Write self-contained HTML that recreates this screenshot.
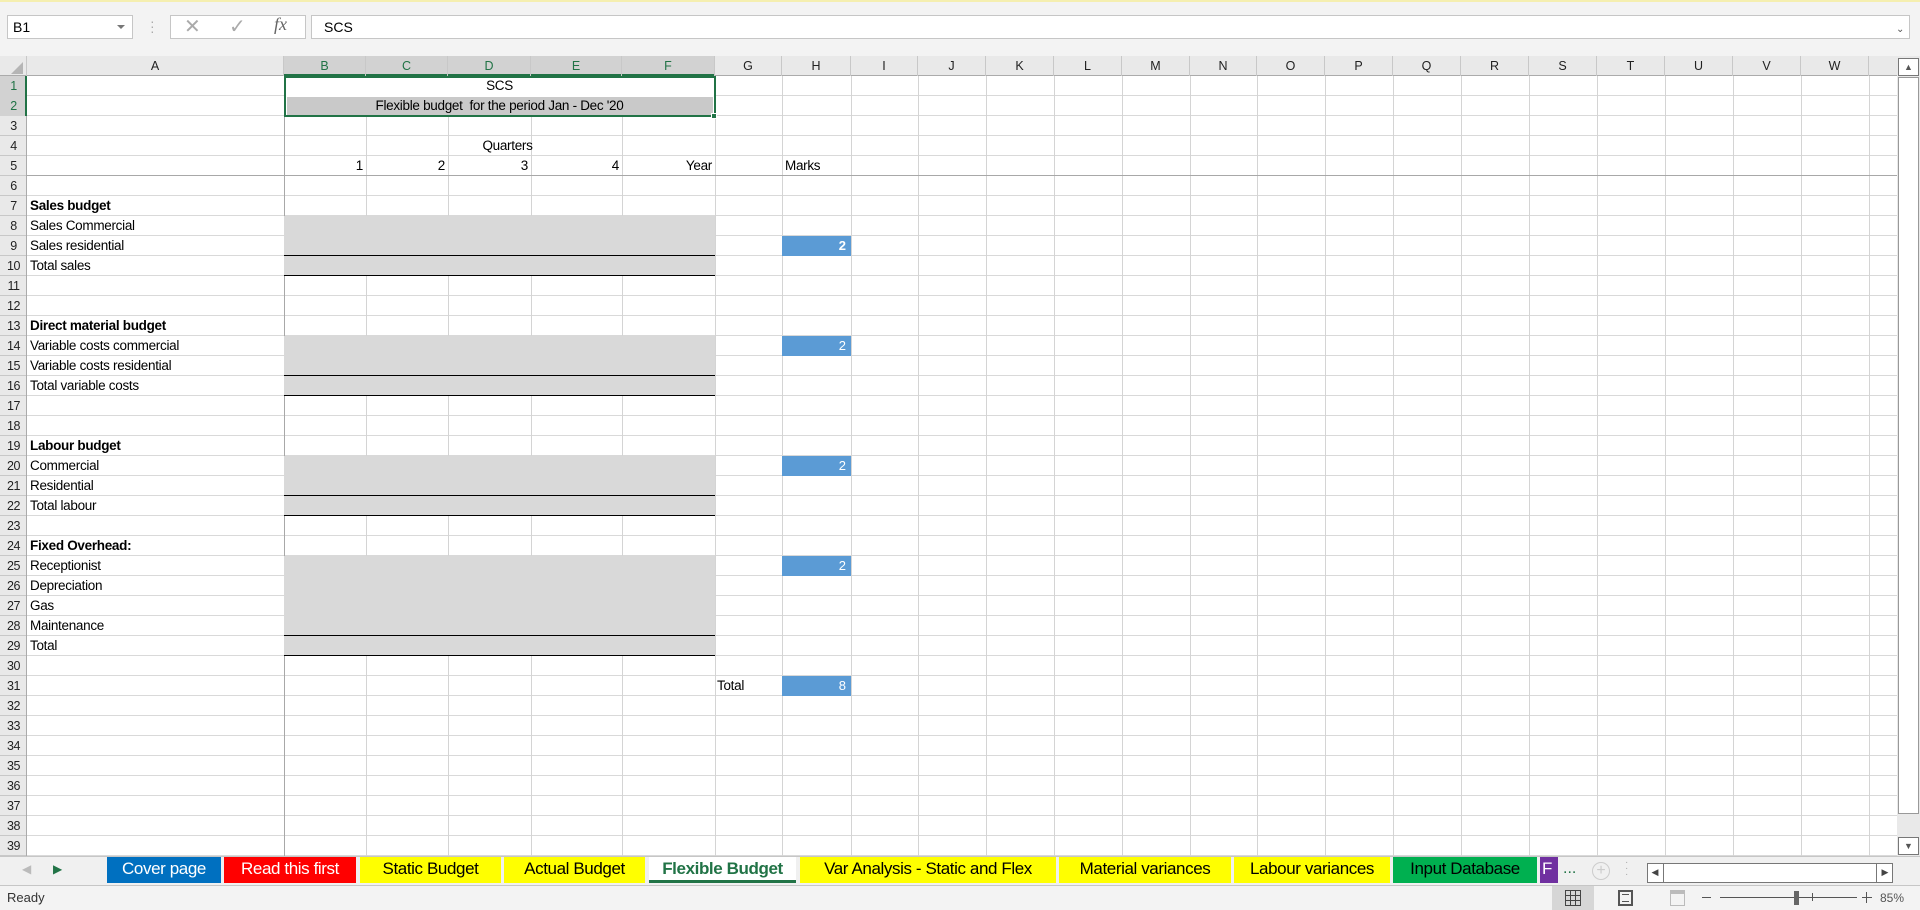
<!DOCTYPE html>
<html><head><meta charset="utf-8"><style>
*{margin:0;padding:0;box-sizing:border-box}
body{width:1920px;height:910px;overflow:hidden;background:#fff;font-family:"Liberation Sans",sans-serif;font-size:13px;color:#000;position:relative}
.a{position:absolute}
.t{position:absolute;height:20px;line-height:20px;white-space:nowrap;font-size:13.5px;letter-spacing:-0.3px}
.rh{position:absolute;left:0;width:27px;height:20px;line-height:20px;text-align:center;font-size:12.5px;color:#222;letter-spacing:-0.5px}
.ch{position:absolute;top:56px;height:20px;line-height:20px;text-align:center;font-size:12.5px;color:#222;border-right:1px solid #c8c8c8}
.vl{position:absolute;top:76px;height:780px;width:1px;background:#d4d4d4}
.tab{position:absolute;top:857px;height:26px;line-height:24px;text-align:center;font-size:17px;letter-spacing:-0.4px}
.blue{position:absolute;left:782px;width:69px;height:20px;background:#5b9bd5;color:#fff;text-align:right;padding-right:5px;line-height:20px;font-size:13px}
.gray{position:absolute;left:284px;width:431px;background:#d9d9d9}
.bl{position:absolute;left:284px;width:431px;height:1px;background:#000}
</style></head><body>
<div class="a" style="left:0;top:0;width:1920px;height:56px;background:#f3f3f3"></div>
<div class="a" style="left:0;top:0;width:1920px;height:2px;background:#f5efb0"></div>
<div class="a" style="left:7px;top:15px;width:126px;height:24px;background:#fff;border:1px solid #c6c6c6;font-size:14px;line-height:22px;padding-left:5px">B1</div>
<div class="a" style="left:117px;top:25px;width:0;height:0;border-left:4px solid transparent;border-right:4px solid transparent;border-top:4px solid #777"></div>
<div class="a" style="left:150px;top:19px;font-size:14px;color:#aaa;line-height:5px">·<br>·<br>·</div>
<div class="a" style="left:170px;top:15px;width:136px;height:24px;background:#fff;border:1px solid #c6c6c6"></div>
<div class="a" style="left:184px;top:14px;font-size:20px;color:#aaa">✕</div>
<div class="a" style="left:229px;top:14px;font-size:20px;color:#aaa">✓</div>
<div class="a" style="left:274px;top:14px;font-size:18px;color:#666;font-family:'Liberation Serif',serif;font-style:italic">fx</div>
<div class="a" style="left:311px;top:15px;width:1599px;height:24px;background:#fff;border:1px solid #c6c6c6;font-size:14px;line-height:22px;padding-left:12px">SCS</div>
<div class="a" style="left:1896px;top:24px;font-size:10px;color:#555">&#8964;</div>

<div class="a" style="left:0;top:56px;width:1897px;height:20px;background:#e9e9e9;border-bottom:1px solid #ababab"></div>
<div class="a" style="left:0;top:56px;width:27px;height:20px;border-right:1px solid #c8c8c8"></div>
<div class="a" style="left:11px;top:62px;width:0;height:0;border-left:12px solid transparent;border-bottom:12px solid #b5b5b5"></div>
<div class="a" style="left:284px;top:56px;width:431px;height:20px;background:#d2d2d2;border-bottom:2px solid #217346"></div>
<div class="ch" style="left:27px;width:257px">A</div>
<div class="ch" style="left:284px;width:82px;color:#217346">B</div>
<div class="ch" style="left:366px;width:82px;color:#217346">C</div>
<div class="ch" style="left:448px;width:83px;color:#217346">D</div>
<div class="ch" style="left:531px;width:91px;color:#217346">E</div>
<div class="ch" style="left:622px;width:93px;color:#217346">F</div>
<div class="ch" style="left:715px;width:67px">G</div>
<div class="ch" style="left:782px;width:69px">H</div>
<div class="ch" style="left:851px;width:67px">I</div>
<div class="ch" style="left:918px;width:68px">J</div>
<div class="ch" style="left:986px;width:68px">K</div>
<div class="ch" style="left:1054px;width:68px">L</div>
<div class="ch" style="left:1122px;width:68px">M</div>
<div class="ch" style="left:1190px;width:67px">N</div>
<div class="ch" style="left:1257px;width:68px">O</div>
<div class="ch" style="left:1325px;width:68px">P</div>
<div class="ch" style="left:1393px;width:68px">Q</div>
<div class="ch" style="left:1461px;width:68px">R</div>
<div class="ch" style="left:1529px;width:68px">S</div>
<div class="ch" style="left:1597px;width:68px">T</div>
<div class="ch" style="left:1665px;width:68px">U</div>
<div class="ch" style="left:1733px;width:68px">V</div>
<div class="ch" style="left:1801px;width:68px">W</div>

<div class="a" style="left:0;top:76px;width:27px;height:780px;background:#e9e9e9;border-right:1px solid #ababab;background-image:repeating-linear-gradient(to bottom,transparent 0 19px,#c8c8c8 19px 20px)"></div>
<div class="a" style="left:0;top:76px;width:27px;height:40px;background:#d2d2d2;border-right:2px solid #217346"></div>

<div class="a" style="left:27px;top:76px;width:1870px;height:780px;background-image:repeating-linear-gradient(to bottom,transparent 0 19px,#d9d9d9 19px 20px)"></div>
<div class="vl" style="left:284px;background:#a8a8a8"></div>
<div class="vl" style="left:366px"></div><div class="vl" style="left:448px"></div><div class="vl" style="left:531px"></div><div class="vl" style="left:622px"></div><div class="vl" style="left:715px"></div><div class="vl" style="left:782px"></div><div class="vl" style="left:851px"></div><div class="vl" style="left:918px"></div><div class="vl" style="left:986px"></div><div class="vl" style="left:1054px"></div><div class="vl" style="left:1122px"></div><div class="vl" style="left:1190px"></div><div class="vl" style="left:1257px"></div><div class="vl" style="left:1325px"></div><div class="vl" style="left:1393px"></div><div class="vl" style="left:1461px"></div><div class="vl" style="left:1529px"></div><div class="vl" style="left:1597px"></div><div class="vl" style="left:1665px"></div><div class="vl" style="left:1733px"></div><div class="vl" style="left:1801px"></div><div class="vl" style="left:1869px"></div>
<div class="a" style="left:27px;top:175px;width:1870px;height:1px;background:#a8a8a8"></div>

<div class="a" style="left:285px;top:76px;width:430px;height:40px;background:#fff"></div>
<div class="a" style="left:287px;top:97px;width:426px;height:18px;background:#c9c9c9"></div>
<div class="a" style="left:284px;top:76px;width:432px;height:41px;border:2px solid #217346"></div>
<div class="a" style="left:711px;top:113px;width:6px;height:6px;background:#217346;border:1px solid #fff"></div>
<div class="t" style="left:284px;top:76px;width:431px;text-align:center">SCS</div>
<div class="t" style="left:284px;top:96px;width:431px;text-align:center">Flexible budget&nbsp; for the period Jan - Dec '20</div>
<div class="t" style="left:292px;top:136px;width:431px;text-align:center">Quarters</div>
<div class="t" style="left:284px;top:156px;width:79px;text-align:right">1</div>
<div class="t" style="left:366px;top:156px;width:79px;text-align:right">2</div>
<div class="t" style="left:448px;top:156px;width:80px;text-align:right">3</div>
<div class="t" style="left:531px;top:156px;width:88px;text-align:right">4</div>
<div class="t" style="left:622px;top:156px;width:90px;text-align:right">Year</div>
<div class="t" style="left:785px;top:156px">Marks</div>

<div class="gray" style="top:216px;height:60px"></div>
<div class="gray" style="top:336px;height:60px"></div>
<div class="gray" style="top:456px;height:60px"></div>
<div class="gray" style="top:556px;height:100px"></div>
<div class="bl" style="top:255px"></div><div class="bl" style="top:275px"></div>
<div class="bl" style="top:375px"></div><div class="bl" style="top:395px"></div>
<div class="bl" style="top:495px"></div><div class="bl" style="top:515px"></div>
<div class="bl" style="top:635px"></div><div class="bl" style="top:655px"></div>

<div class="blue" style="top:236px;font-weight:bold">2</div>
<div class="blue" style="top:336px">2</div>
<div class="blue" style="top:456px">2</div>
<div class="blue" style="top:556px">2</div>
<div class="blue" style="top:676px">8</div>
<div class="t" style="left:717px;top:676px">Total</div>

<div class="t" style="left:30px;top:196px;font-weight:bold">Sales budget</div>
<div class="t" style="left:30px;top:216px">Sales Commercial</div>
<div class="t" style="left:30px;top:236px">Sales residential</div>
<div class="t" style="left:30px;top:256px">Total sales</div>
<div class="t" style="left:30px;top:316px;font-weight:bold">Direct material budget</div>
<div class="t" style="left:30px;top:336px">Variable costs commercial</div>
<div class="t" style="left:30px;top:356px">Variable costs residential</div>
<div class="t" style="left:30px;top:376px">Total variable costs</div>
<div class="t" style="left:30px;top:436px;font-weight:bold">Labour budget</div>
<div class="t" style="left:30px;top:456px">Commercial</div>
<div class="t" style="left:30px;top:476px">Residential</div>
<div class="t" style="left:30px;top:496px">Total labour</div>
<div class="t" style="left:30px;top:536px;font-weight:bold">Fixed Overhead:</div>
<div class="t" style="left:30px;top:556px">Receptionist</div>
<div class="t" style="left:30px;top:576px">Depreciation</div>
<div class="t" style="left:30px;top:596px">Gas</div>
<div class="t" style="left:30px;top:616px">Maintenance</div>
<div class="t" style="left:30px;top:636px">Total</div>

<div class="rh" style="top:76px;color:#217346">1</div><div class="rh" style="top:96px;color:#217346">2</div><div class="rh" style="top:116px">3</div><div class="rh" style="top:136px">4</div><div class="rh" style="top:156px">5</div><div class="rh" style="top:176px">6</div><div class="rh" style="top:196px">7</div><div class="rh" style="top:216px">8</div><div class="rh" style="top:236px">9</div><div class="rh" style="top:256px">10</div><div class="rh" style="top:276px">11</div><div class="rh" style="top:296px">12</div><div class="rh" style="top:316px">13</div><div class="rh" style="top:336px">14</div><div class="rh" style="top:356px">15</div><div class="rh" style="top:376px">16</div><div class="rh" style="top:396px">17</div><div class="rh" style="top:416px">18</div><div class="rh" style="top:436px">19</div><div class="rh" style="top:456px">20</div><div class="rh" style="top:476px">21</div><div class="rh" style="top:496px">22</div><div class="rh" style="top:516px">23</div><div class="rh" style="top:536px">24</div><div class="rh" style="top:556px">25</div><div class="rh" style="top:576px">26</div><div class="rh" style="top:596px">27</div><div class="rh" style="top:616px">28</div><div class="rh" style="top:636px">29</div><div class="rh" style="top:656px">30</div><div class="rh" style="top:676px">31</div><div class="rh" style="top:696px">32</div><div class="rh" style="top:716px">33</div><div class="rh" style="top:736px">34</div><div class="rh" style="top:756px">35</div><div class="rh" style="top:776px">36</div><div class="rh" style="top:796px">37</div><div class="rh" style="top:816px">38</div><div class="rh" style="top:836px">39</div>

<div class="a" style="left:1897px;top:56px;width:23px;height:801px;background:#e9e9e9"></div>
<div class="a" style="left:1898px;top:58px;width:21px;height:18px;background:#fff;border:1px solid #777;font-size:9px;text-align:center;line-height:16px;color:#555">▲</div>
<div class="a" style="left:1898px;top:77px;width:21px;height:737px;background:#fff;border:1px solid #999"></div>
<div class="a" style="left:1898px;top:837px;width:21px;height:18px;background:#fff;border:1px solid #777;font-size:9px;text-align:center;line-height:16px;color:#555">▼</div>

<div class="a" style="left:0;top:856px;width:1920px;height:30px;background:#f0f0f0;border-top:1px solid #c6c6c6;border-bottom:1px solid #c6c6c6"></div>
<div class="a" style="left:22px;top:862px;font-size:12px;color:#bbb">◀</div>
<div class="a" style="left:53px;top:862px;font-size:12px;color:#217346">▶</div>
<div class="tab" style="left:107px;width:114px;background:#0070c0;color:#fff">Cover page</div>
<div class="tab" style="left:224px;width:132px;background:#ff0000;color:#fff">Read this first</div>
<div class="tab" style="left:360px;width:141px;background:#ffff00">Static Budget</div>
<div class="tab" style="left:504px;width:141px;background:#ffff00">Actual Budget</div>
<div class="tab" style="left:649px;width:147px;background:#fff;color:#217346;font-weight:bold;border-bottom:3px solid #217346">Flexible Budget</div>
<div class="tab" style="left:800px;width:256px;background:#ffff00">Var Analysis - Static and Flex</div>
<div class="tab" style="left:1059px;width:172px;background:#ffff00">Material variances</div>
<div class="tab" style="left:1234px;width:156px;background:#ffff00">Labour variances</div>
<div class="tab" style="left:1393px;width:144px;background:#00b050">Input Database</div>
<div class="tab" style="left:1540px;width:18px;background:#7030a0;color:#fff;overflow:hidden;text-align:left;padding-left:2px">F</div>
<div class="a" style="left:1563px;top:860px;font-size:16px;color:#217346">...</div>
<div class="a" style="left:1592px;top:862px;width:18px;height:18px;border:1.5px solid #ccc;border-radius:50%;color:#ccc;text-align:center;line-height:15px;font-size:16px">+</div>
<div class="a" style="left:1625px;top:860px;font-size:10px;color:#aaa;line-height:6px">·<br>·<br>·</div>
<div class="a" style="left:1647px;top:863px;width:246px;height:20px;background:#fff;border:1px solid #777"></div>
<div class="a" style="left:1647px;top:863px;width:17px;height:20px;border-right:1px solid #777;font-size:9px;line-height:18px;text-align:center;color:#444">◀</div>
<div class="a" style="left:1876px;top:863px;width:17px;height:20px;border-left:1px solid #777;font-size:9px;line-height:18px;text-align:center;color:#444">▶</div>

<div class="a" style="left:0;top:886px;width:1920px;height:24px;background:#f3f3f3"></div>
<div class="a" style="left:7px;top:890px;font-size:13px;color:#333">Ready</div>
<div class="a" style="left:1552px;top:886px;width:42px;height:24px;background:#d6d6d6"></div>
<div class="a" style="left:1565px;top:890px;width:16px;height:16px;border:1px solid #444;background-image:linear-gradient(to right,transparent 4px,#444 4px 5px,transparent 5px 9px,#444 9px 10px,transparent 10px),linear-gradient(to bottom,transparent 4px,#444 4px 5px,transparent 5px 9px,#444 9px 10px,transparent 10px)"></div>
<div class="a" style="left:1618px;top:890px;width:15px;height:16px;border:2px solid #555"></div>
<div class="a" style="left:1622px;top:894px;width:7px;height:8px;border-top:1px solid #555;border-bottom:1px solid #555"></div>
<div class="a" style="left:1670px;top:890px;width:15px;height:16px;border:1.5px solid #bbb;border-top:4px solid #bbb"></div>
<div class="a" style="left:1702px;top:897px;width:9px;height:1px;background:#555"></div>
<div class="a" style="left:1720px;top:897px;width:137px;height:1px;background:#555"></div>
<div class="a" style="left:1794px;top:891px;width:5px;height:14px;background:#666"></div>
<div class="a" style="left:1812px;top:893px;width:1px;height:8px;background:#555"></div>
<div class="a" style="left:1862px;top:897px;width:10px;height:1px;background:#555"></div>
<div class="a" style="left:1866px;top:892px;width:1px;height:11px;background:#555"></div>
<div class="a" style="left:1880px;top:891px;font-size:12px;color:#555">85%</div>
</body></html>
